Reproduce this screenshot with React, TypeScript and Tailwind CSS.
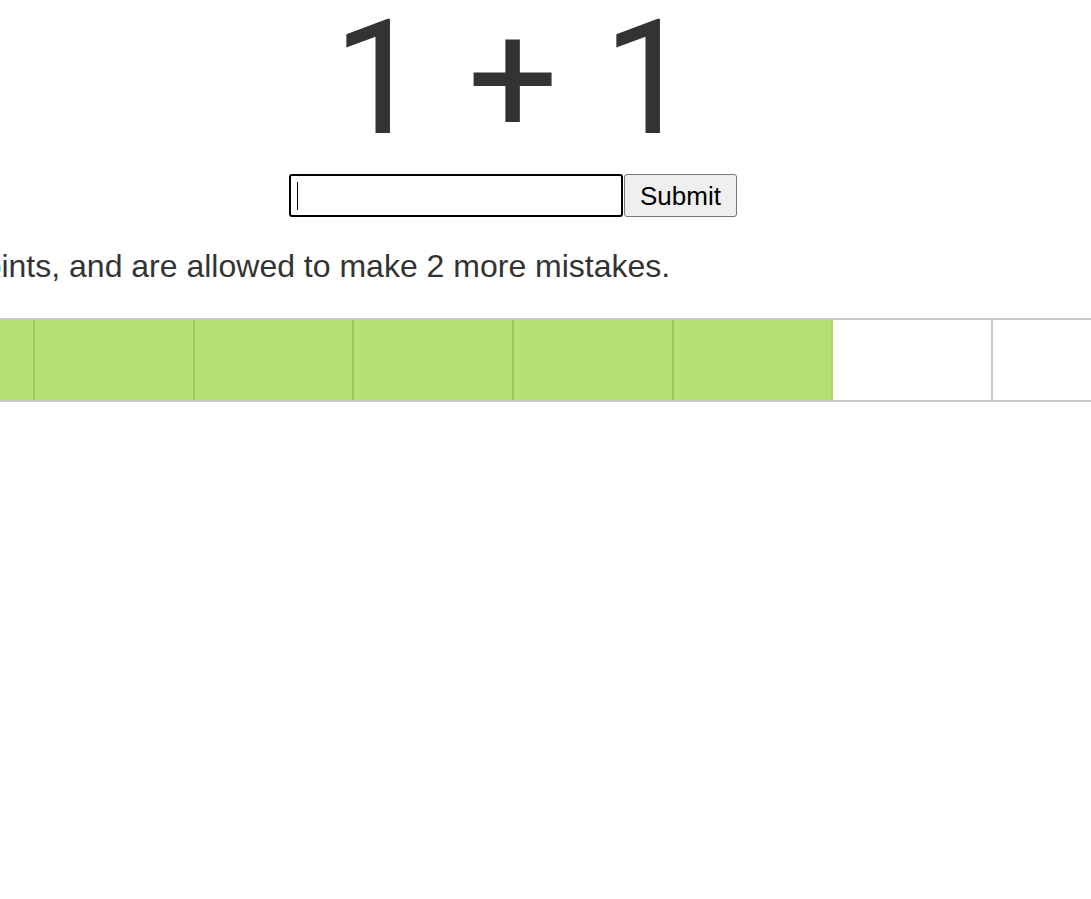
import { useState } from "react"

const cells = [true, true, true, true, true, true, false, false, false, false]

export default function App() {
  const [answer, setAnswer] = useState("")

  return (
    <div className="w-full min-h-screen overflow-hidden bg-white text-[#333] font-['Liberation_Sans',Arial,sans-serif]">
      <div className="w-[1026px] flex flex-col items-center">
        <h1 className="mt-[-1px] h-[160px] text-[160px] leading-none font-normal whitespace-nowrap [word-spacing:5px] font-['Roboto',sans-serif]">
          1 + 1
        </h1>
        <form className="mt-[15px] flex gap-[1px]" onSubmit={(e) => e.preventDefault()}>
          <div className="relative">
            <input
              value={answer}
              onChange={(e) => setAnswer(e.target.value)}
              className="w-[334px] h-[43px] border-2 border-black rounded-[3px] px-[6px] text-[26px] text-black outline-none"
            />
            {answer === "" && (
              <span className="absolute left-[8px] top-[8px] w-px h-[28px] bg-black" />
            )}
          </div>
          <button
            type="submit"
            className="w-[113px] h-[43px] bg-[#efefef] border border-[#767676] rounded-[3px] text-[26px] leading-none text-black"
          >
            Submit
          </button>
        </form>
      </div>
      <p className="mt-[31px] ml-[-202px] text-[32px] leading-[37px] whitespace-nowrap">
        You have 6 points, and are allowed to make 2 more mistakes.
      </p>
      <div className="mt-[33px] flex border-y-2 border-[#c8c8c8] overflow-hidden">
        <div className="flex shrink-0 ml-[-126.7px]">
          {cells.map((done, i) => (
            <div
              key={i}
              className={
                done
                  ? "w-[159.7px] h-[80px] shrink-0 border-l-2 border-[#9fcb55] bg-[#b5e173]"
                  : i > 0 && cells[i - 1]
                    ? "w-[159.7px] h-[80px] shrink-0 border-l-2 border-[#a8d664] bg-white"
                    : "w-[159.7px] h-[80px] shrink-0 border-l-2 border-[#c8c8c8] bg-white"
              }
            />
          ))}
        </div>
      </div>
    </div>
  )
}
